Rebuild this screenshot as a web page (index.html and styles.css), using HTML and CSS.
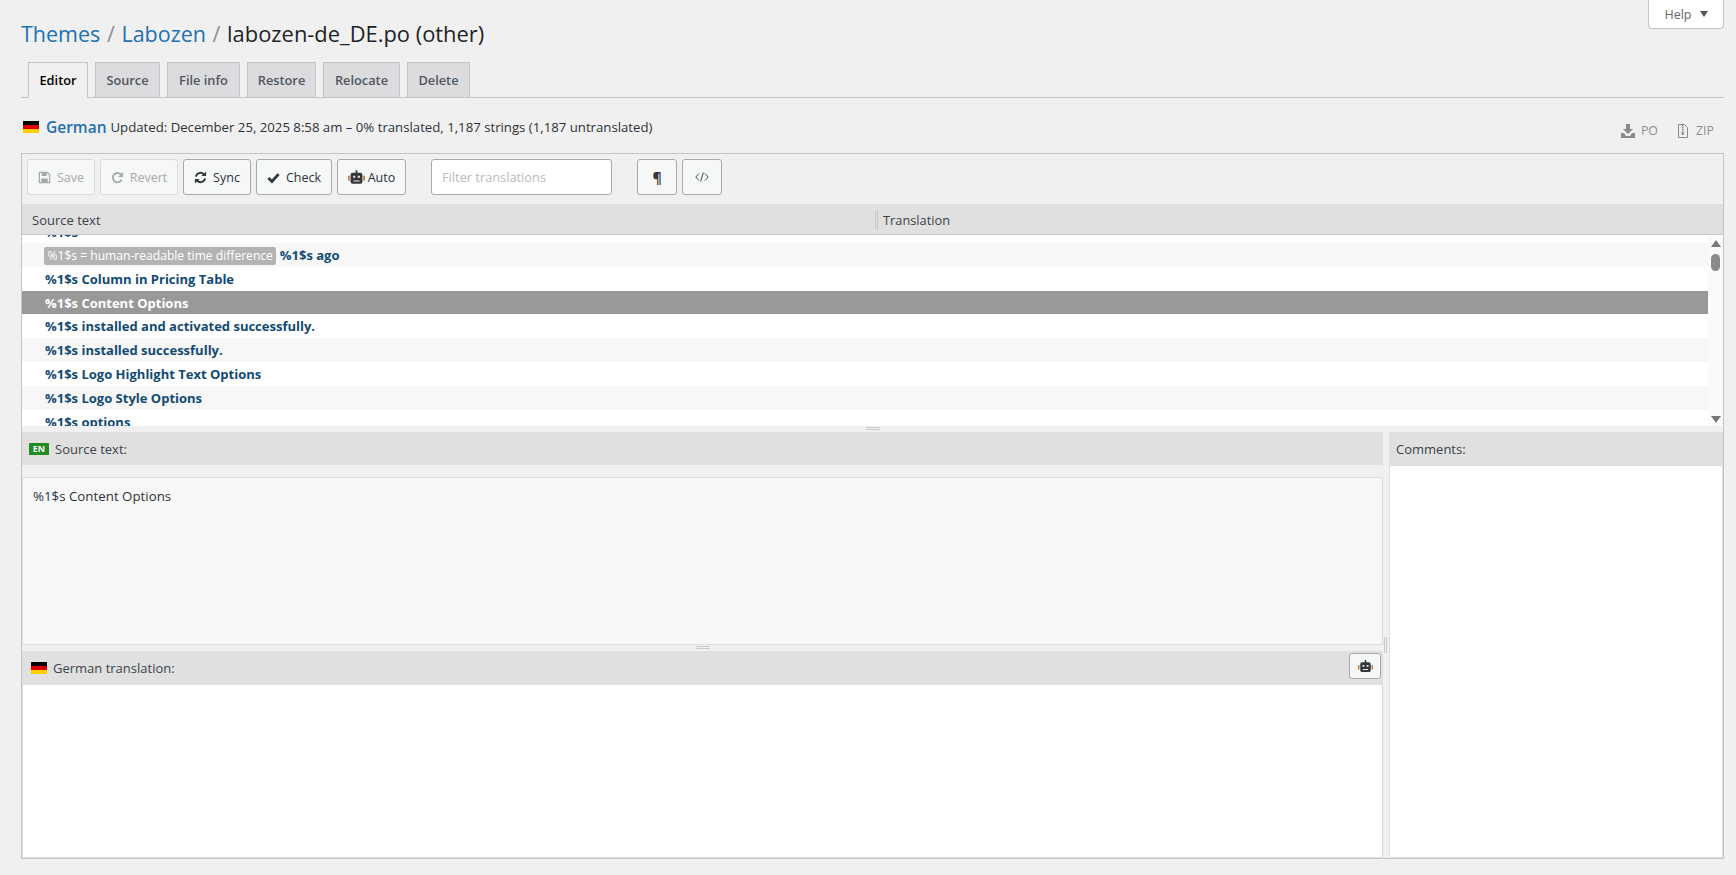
FILE: index.html
```html
<!DOCTYPE html>
<html lang="en">
<head>
<meta charset="utf-8">
<title>labozen-de_DE.po</title>
<link rel="stylesheet" href="styles.css">
</head>
<body>
<svg class="defs" width="0" height="0" aria-hidden="true">
  <symbol id="robot" viewBox="0 0 20 16">
    <path fill="#c77a3a" d="M0 6.5h2v6H0zM18 6.5h2v6h-2z"/>
    <path fill="#33363b" d="M9 0h2v3h3.5A2.5 2.5 0 0 1 17 5.500v8a2.500 2.500 0 0 1-2.500 2.500h-9A2.500 2.500 0 0 1 3 13.500v-8A2.500 2.500 0 0 1 5.500 3H9z"/>
    <path fill="#e8e8e8" d="M6 6.500h2.500V9H6zM11.500 6.500H14V9h-2.500zM6.500 12h7v1.300h-7z"/>
  </symbol>
  <symbol id="flag" viewBox="0 0 16 12">
    <rect width="16" height="4" y="0" fill="#000"/>
    <rect width="16" height="4" y="4" fill="#d00"/>
    <rect width="16" height="4" y="8" fill="#ffce00"/>
  </symbol>
</svg>
<div class="page">
  <button class="help">Help <span class="caret"></span></button>
  <h1 class="crumbs"><a href="#">Themes</a> <span class="sep">/</span> <a href="#">Labozen</a> <span class="sep">/</span> <span class="file">labozen-de_DE.po (other)</span></h1>
  <nav class="tabs">
    <a class="tab tab-editor active" href="#">Editor</a>
    <a class="tab tab-source" href="#">Source</a>
    <a class="tab tab-info" href="#">File info</a>
    <a class="tab tab-restore" href="#">Restore</a>
    <a class="tab tab-relocate" href="#">Relocate</a>
    <a class="tab tab-delete" href="#">Delete</a>
  </nav>
  <div class="meta">
    <svg class="flag-icon"><use href="#flag"/></svg>
    <a class="lang" href="#">German</a>
    <span class="stats">Updated: December 25, 2025 8:58 am – 0% translated, 1,187 strings (1,187 untranslated)</span>
    <span class="downloads">
      <a class="dl" href="#"><svg class="dl-icon" viewBox="0 0 14 14"><path fill="#8a8a8a" d="M5 0h4v5h3L7 10 2 5h3zM0 9h3l2 3h4l2-3h3v5H0z"/></svg>PO</a>
      <a class="dl" href="#"><svg class="dl-icon" viewBox="0 0 14 14"><path fill="none" stroke="#8a8a8a" d="M2.500.5h6l3 3v10h-9z"/><path fill="#8a8a8a" d="M6 1h1.500v1.500H6zM6 3h1.500v1.500H6zM6 5h1.500v1.500H6zM5.700 7.500h2.100v3.500H5.700z"/></svg>ZIP</a>
    </span>
  </div>
  <section class="editor">
    <div class="toolbar">
      <button class="btn btn-save" disabled><svg class="ico" viewBox="0 0 14 14"><path fill="none" stroke="currentColor" stroke-width="1.300" d="M1.500 1.500h8.500l2.500 2.500v8.500h-11z"/><path fill="currentColor" d="M4 1.500h5.500v4H4zM3.500 8h7v4.500h-7z"/></svg>Save</button>
      <button class="btn btn-revert" disabled><svg class="ico" viewBox="0 0 14 14"><path fill="none" stroke="currentColor" stroke-width="2" d="M11.400 9.500A5 5 0 1 1 10.500 3.500"/><path fill="currentColor" d="M13 1v5.500H7.500z"/></svg>Revert</button>
      <button class="btn btn-sync"><svg class="ico" viewBox="0 0 14 14"><path fill="none" stroke="#33363b" stroke-width="2" d="M2 6a5 5 0 0 1 8.500-2.500M12 8a5 5 0 0 1-8.500 2.500"/><path fill="#33363b" d="M13 0.500v5H8zM1 13.500v-5h5z"/></svg>Sync</button>
      <button class="btn btn-check"><svg class="ico" viewBox="0 0 14 14"><path fill="none" stroke="#33363b" stroke-width="3" d="M1.500 7.500l3.800 3.800 7.200-8"/></svg>Check</button>
      <button class="btn btn-auto"><svg class="ico-robot"><use href="#robot"/></svg>Auto</button>
      <input class="filter" type="text" placeholder="Filter translations">
      <button class="btn btn-para">¶</button>
      <button class="btn btn-code"><svg class="ico-code" viewBox="0 0 14 10"><path fill="none" stroke="#33515f" stroke-width="1" d="M4 1.500L.8 5 4 8.500M10 1.500L13.200 5 10 8.500M8.300.5L5.700 9.500"/></svg></button>
    </div>
    <div class="cols">
      <div class="col col-src">Source text</div>
      <div class="col col-tr">Translation</div>
    </div>
    <div class="list-wrap">
      <div class="list">
        <div class="row row-cut">%1$s</div>
        <div class="row alt"><span class="ctx">%1$s = human-readable time difference</span> %1$s ago</div>
        <div class="row">%1$s Column in Pricing Table</div>
        <div class="row sel">%1$s Content Options</div>
        <div class="row">%1$s installed and activated successfully.</div>
        <div class="row alt">%1$s installed successfully.</div>
        <div class="row">%1$s Logo Highlight Text Options</div>
        <div class="row alt">%1$s Logo Style Options</div>
        <div class="row">%1$s options</div>
      </div>
      <div class="scroll">
        <span class="arr arr-up"></span>
        <span class="thumb"></span>
        <span class="arr arr-down"></span>
      </div>
    </div>
    <div class="hsplit hsplit-main"><span class="grip"></span></div>
    <div class="lower">
      <div class="left">
        <div class="pane-head"><span class="en">EN</span>Source text:</div>
        <div class="source">%1$s Content Options</div>
        <div class="hsplit hsplit-sub"><span class="grip"></span></div>
        <div class="pane-head pane-head-tr">
          <svg class="flag-icon"><use href="#flag"/></svg>German translation:
          <button class="btn btn-robot"><svg class="ico-robot"><use href="#robot"/></svg></button>
        </div>
        <div class="target"></div>
      </div>
      <div class="vsplit"><span class="vgrip"></span></div>
      <div class="right">
        <div class="pane-head pane-head-c">Comments:</div>
        <div class="comments"></div>
      </div>
    </div>
  </section>
</div>
</body>
</html>
```

FILE: styles.css
```css
* { box-sizing: border-box; }
html, body { margin: 0; height: 100%; }
body {
  background: #f0f0f1;
  color: #3c434a;
  font-family: "Open Sans", "Noto Sans", "Liberation Sans", sans-serif;
  font-size: 13px;
  overflow: hidden;
}
.defs { position: absolute; }
a { text-decoration: none; color: #2271b1; }
button { font-family: inherit; }
.page { position: relative; padding: 0 12px 0 21px; height: 875px; }

.help {
  position: absolute; top: 0; right: 12px;
  width: 76px; height: 29px;
  background: #fff; border: 1px solid #c3c4c7; border-top: 0;
  border-radius: 0 0 4px 4px;
  color: #646970; font-size: 12.5px;
  display: flex; align-items: center; justify-content: center; gap: 8px;
}
.caret { width: 0; height: 0; border: 4.5px solid transparent; border-top: 6px solid #50575e; border-bottom: 0; }

.crumbs {
  margin: 0; height: 62px; padding-top: 19px;
  font-size: 21.5px; font-weight: 400; line-height: 30px; color: #1d2327;
  white-space: nowrap;
}
.sep { color: #8c8f94; margin: 0 1px; }
.file { font-size: 21.9px; }

.tabs { display: flex; gap: 7px; height: 36px; padding-left: 7px; border-bottom: 1px solid #c3c4c7; }
.tab {
  height: 36px; display: flex; align-items: center; justify-content: center; padding-bottom: 1px;
  background: #dcdcde; border: 1px solid #c3c4c7; color: #50575e;
  font-size: 12.8px; font-weight: 600;
}
.tab.active { background: #f0f0f1; border-bottom-color: #f0f0f1; color: #000; }
.tab-editor { width: 60px; }
.tab-source { width: 65px; }
.tab-info { width: 73px; }
.tab-restore { width: 69px; }
.tab-relocate { width: 77px; }
.tab-delete { width: 63px; }

.meta { height: 55px; display: flex; align-items: center; padding: 7px 0 5px 2px; }
.flag-icon { width: 16px; height: 12px; flex: none; }
.lang { margin-left: 7px; font-size: 15.5px; font-weight: 600; }
.stats { margin-left: 4px; color: #2c3338; font-size: 13.2px; }
.downloads { margin-left: auto; display: flex; gap: 18px; padding: 8px 10px 0 0; }
.dl { display: flex; align-items: center; gap: 6px; color: #8a8f94; font-size: 12.4px; }
.dl-icon { width: 14px; height: 14px; }

.editor { height: 706px; border: 1px solid #c3c4c7; }
.toolbar { height: 50px; padding: 5px; display: flex; gap: 5px; }
.btn {
  height: 36px; padding: 0; display: flex; align-items: center; justify-content: center; gap: 6px;
  background: #f6f7f7; border: 1px solid #a7aaad; border-radius: 3px;
  color: #2c3338; font-size: 12.5px;
}
.btn:disabled { border-color: #dcdcde; color: #a7aaad; }
.ico { width: 13px; height: 13px; }
.ico-robot { width: 17px; height: 14px; }
.ico-code { width: 14px; height: 10px; }
.btn-save { width: 68px; }
.btn-revert { width: 78px; }
.btn-sync { width: 68px; }
.btn-check { width: 76px; }
.btn-auto { width: 69px; gap: 3px; }
.filter {
  width: 181px; height: 36px; margin-left: 20px; padding: 0 10px;
  background: #fff; border: 1px solid #a7aaad; border-radius: 3px;
  font: inherit; font-size: 12.8px;
}
.filter::placeholder { color: #b8babd; }
.btn-para { width: 40px; margin-left: 20px; font-size: 14px; font-weight: 700; color: #33363b; }
.btn-code { width: 40px; }

.cols { height: 31px; display: flex; align-items: center; padding-top: 1px; background: #e0e0e0; border-bottom: 1px solid #c9c9c9; }
.col-src { width: 853px; padding-left: 10px; }
.col-tr { padding-left: 5px; border-left: 3px double #c9c9c9; font-size: 12.8px; }

.list-wrap { height: 191px; display: flex; background: #fff; overflow: hidden; }
.list { flex: 1; margin-top: -16px; color: #124a76; font-weight: 700; }
.row { height: 24px; line-height: 25px; padding-left: 23px; white-space: nowrap; overflow: hidden; }
.row-cut { line-height: 27px; }
.row.alt { background: #f7f7f7; }
.row.sel { height: 23px; line-height: 24px; background: #999; color: #fff; }
.ctx {
  display: inline-block; height: 18px; line-height: 18px; padding: 0 3.5px; margin-left: -1px;
  background: #b3b3b3; border-radius: 2px; color: #fff; font-weight: 400; font-size: 12.1px;
}
.scroll { width: 15px; position: relative; background: #fafafa; flex: none; }
.arr { position: absolute; left: 3px; width: 0; height: 0; border: 5px solid transparent; }
.arr-up { top: 5px; border-top: 0; border-bottom: 7px solid #777; }
.arr-down { bottom: 3px; border-bottom: 0; border-top: 7px solid #777; }
.thumb { position: absolute; top: 19px; left: 3px; width: 9px; height: 17px; border-radius: 5px; background: #8a8a8a; }

.hsplit { height: 6px; display: flex; justify-content: center; background: #f0f0f1; }
.grip { width: 14px; height: 3px; margin-top: 1px; border-top: 1px solid #c9c9c9; border-bottom: 1px solid #c9c9c9; }

.lower { height: 426px; display: flex; }
.left { width: 1361px; display: flex; flex-direction: column; }
.pane-head {
  height: 33px; display: flex; align-items: center; padding-left: 7px; gap: 6px;
  background: #e0e0e0; flex: none;
}
.en {
  width: 20px; height: 12px; background: #228b22; color: #fff; font-size: 9px; font-weight: 700;
  display: flex; align-items: center; justify-content: center;
}
.source {
  height: 168px; margin-top: 12px; padding: 9px 10px;
  background: #f7f7f7; border: 1px solid #ddd; color: #2c3338; font-size: 13.3px;
}
.pane-head-tr { position: relative; padding-left: 9px; height: 34px; }
.btn-robot { position: absolute; right: 2px; top: 2px; width: 32px; height: 26px; }
.btn-robot .ico-robot { width: 15px; height: 12px; }
.target { flex: 1; background: #fff; border: 1px solid #ddd; border-top: 0; }
.vsplit { width: 6px; position: relative; flex: none; }
.vgrip { position: absolute; left: 1px; top: 205px; width: 3px; height: 16px; border-left: 1px solid #c9c9c9; border-right: 1px solid #c9c9c9; }
.right { flex: 1; display: flex; flex-direction: column; }
.pane-head-c { padding-left: 7px; border-bottom: 1px solid #ddd; height: 34px; }
.comments { flex: 1; background: #fff; border: 1px solid #ddd; border-top: 0; }
```
